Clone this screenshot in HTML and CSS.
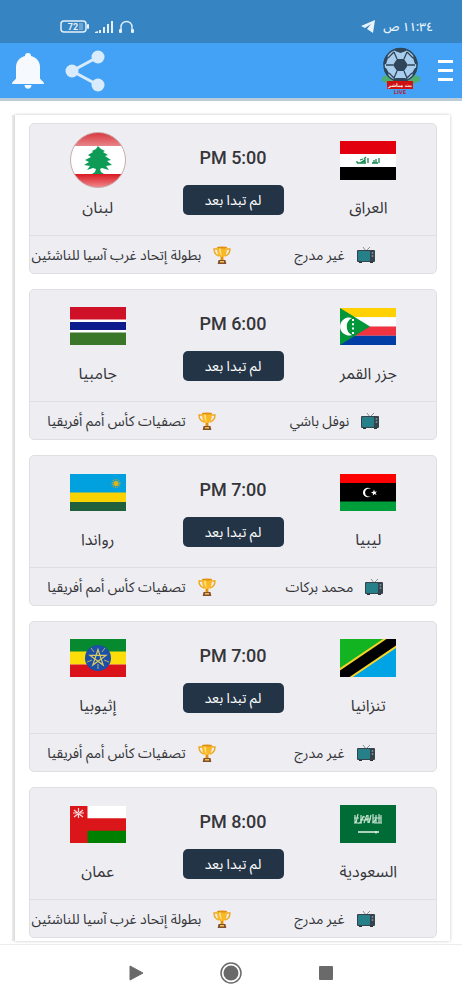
FILE: index.html
```html
<!DOCTYPE html>
<html lang="ar" dir="rtl">
<head>
    <meta charset="UTF-8">
    <meta name="viewport" content="width=device-width, initial-scale=1.0">
    <title>بث مباشر</title>
    <link rel="stylesheet" href="styles.css">
</head>
<body>

    <svg class="sprite" aria-hidden="true">
        <symbol id="icon-tv" viewBox="0 0 18 16">
            <path d="M6 0l3 4 4-4" fill="none" stroke="#8a9096" stroke-width="1"/>
            <rect x="0" y="3" width="18" height="12" rx="1" fill="#36434a"/>
            <rect x="1" y="4" width="12" height="10" rx="1" fill="#26808a"/>
            <circle cx="15.500" cy="6" r="1" fill="#78909c"/>
            <circle cx="15.500" cy="9" r="1" fill="#78909c"/>
            <path d="M2 15h3v1H2zM13 15h3v1h-3z" fill="#26343b"/>
        </symbol>
        <symbol id="icon-trophy" viewBox="0 0 18 18">
            <path d="M4.500 3H1c0 4 1.500 6 5 7M13.500 3H17c0 4-1.500 6-5 7" fill="none" stroke="#f0a61c" stroke-width="1.400"/>
            <path d="M4 1h10c0 5-.8 9-3.500 10l-.3 3H7.800l-.3-3C4.800 10 4 6 4 1z" fill="#f9b824"/>
            <path d="M6 2h2c0 4 .3 6 1 8-2-1-3-4-3-8z" fill="#ffe07a"/>
            <ellipse cx="9" cy="1.500" rx="5" ry="1" fill="#e08f10"/>
            <path d="M8 11h2l.5 3h-3z" fill="#e08f10"/>
            <path d="M5.500 14h7l.8 4H4.700z" fill="#83502f"/>
            <path d="M7 15h4v1.500H7z" fill="#f5c04a"/>
        </symbol>
    </svg>

    <div class="status-bar">
        <div class="status-group">
            <span class="clock">١١:٣٤ ص</span>
            <svg width="14" height="13" viewBox="0 0 14 13"><path d="M14 0L0 6l4 2 6-4-4 5 6 4z" fill="#e8f3fc"/></svg>
        </div>
        <div class="status-group status-icons">
            <svg width="15" height="14" viewBox="0 0 15 14">
                <path d="M2 11V7a5.500 5.500 0 0 1 11 0v4" fill="none" stroke="#e4f0fa" stroke-width="1.400"/>
                <rect x="0" y="9" width="3" height="4" rx="1" fill="#e4f0fa"/>
                <rect x="12" y="9" width="3" height="4" rx="1" fill="#e4f0fa"/>
            </svg>
            <svg width="18" height="13" viewBox="0 0 18 13" fill="#e4f0fa">
                <path d="M0 13v-1l3-1v2zM4 10h2v3H4zM8 7h2v6H8zM12 4h2v9h-2zM16 1h2v12h-2z"/>
            </svg>
            <svg width="29" height="13" viewBox="0 0 29 13">
                <rect x="1" y="1" width="25" height="11" rx="3" fill="none" stroke="#e4f0fa" stroke-width="1.500"/>
                <path d="M19 3h4v7h-4z" fill="#6aa5d4"/>
                <rect x="27" y="4" width="2" height="5" rx="1" fill="#e4f0fa"/>
                <text x="13" y="10" class="battery-text">72</text>
            </svg>
        </div>
    </div>

    <header class="app-bar">
        <button class="menu-btn" type="button" aria-label="القائمة"><i></i><i></i><i></i></button>
        <a class="logo" href="#" aria-label="بث مباشر">
            <svg width="40" height="50" viewBox="0 0 40 50">
                <ellipse cx="20" cy="33" rx="19.500" ry="6" fill="#4fae74"/>
                <clipPath id="ball"><circle cx="19.500" cy="19" r="17"/></clipPath>
                <g clip-path="url(#ball)">
                    <circle cx="19.500" cy="19" r="17" fill="#a9cdec"/>
                    <g fill="#2f4559">
                        <path d="M16 13h7l4 6-4 6h-7l-4-6z"/>
                        <path d="M12 0h15l-2 5-5.500 2L14 5z"/>
                        <path d="M0 9l6 0 1 3-2 6-5 1z"/>
                        <path d="M39 9l-6 0-1 3 2 6 5 1z"/>
                        <path d="M0 21l5 1 3 5-2 5-6-2z"/>
                        <path d="M39 21l-5 1-3 5 2 5 6-2z"/>
                        <path d="M12 34l3-2h9l3 2v4H12z"/>
                    </g>
                    <path d="M16 13l-3-7M23 13l3-7M12 19H5M27 19H34M16 25l-3 7M23 25l3 7M7 12l6-6M32 12l-6-6M8 27l6 6M31 27l-6 6" fill="none" stroke="#2f4559" stroke-width="1.300"/>
                </g>
                <circle cx="19.500" cy="19" r="16.500" fill="none" stroke="#2f4559" stroke-width="1.500"/>
                <rect x="6" y="35" width="26" height="8" fill="#cf1111"/>
                <text x="19" y="41" class="logo-text">بث مباشر</text>
                <text x="19" y="48" class="logo-live">LIVE</text>
            </svg>
        </a>
        <button class="share-btn" type="button" aria-label="مشاركة">
            <svg width="40" height="42" viewBox="0 0 40 42">
                <path d="M33 7L7 21l26 14" fill="none" stroke="#d9ecfd" stroke-width="3"/>
                <g fill="#d9ecfd"><circle cx="33" cy="7" r="6.500"/><circle cx="7" cy="21" r="6.500"/><circle cx="33" cy="35" r="6.500"/></g>
            </svg>
        </button>
        <button class="bell-btn" type="button" aria-label="التنبيهات">
            <svg width="32" height="36" viewBox="0 0 32 36" fill="#f6fafe">
                <path d="M16 0a3 3 0 0 1 3 3c6 1.500 9 6 9 11v11c0 2 4 3 4 6H0c0-3 4-4 4-6V14C4 9 7 4.500 13 3a3 3 0 0 1 3-3z"/>
                <path d="M12.500 32h7c0 5-7 5-7 0z"/>
            </svg>
        </button>
    </header>

    <main class="matches">

        <article class="match">
            <div class="match-main">
                <div class="team">
                    <div class="flag">
                        <svg width="56" height="39" viewBox="0 0 56 39">
                            <path d="M0 0h56v13H0z" fill="#e2000f"/>
                            <path d="M0 13h56v13H0z" fill="#fff"/>
                            <path d="M0 26h56v13H0z"/>
                            <path d="M17 22h9M17 22v-2M20 22l5-3v3M24 18l2-2M28 17v5M32 22h6M34 22v-3M36 22v-4M39 17v5M20 19l3-1" fill="none" stroke="#158a50" stroke-width="1.300"/>
                        </svg>
                    </div>
                    <span class="team-name">العراق</span>
                </div>
                <div class="info">
                    <time class="kickoff">PM 5:00</time>
                    <span class="state">لم تبدا بعد</span>
                </div>
                <div class="team">
                    <div class="flag">
                        <svg width="56" height="56" viewBox="0 0 56 56">
                            <defs>
                                <linearGradient id="shine" x1="0" y1="0" x2="0" y2="1">
                                    <stop offset="0" stop-color="#d7363d"/><stop offset=".25" stop-color="#e8868a"/>
                                    <stop offset=".25" stop-color="#fff"/><stop offset=".75" stop-color="#fff"/>
                                    <stop offset=".75" stop-color="#d9161f"/><stop offset="1" stop-color="#f08a8c"/>
                                </linearGradient>
                            </defs>
                            <circle cx="28" cy="28" r="27.500" fill="url(#shine)" stroke="#c9a9ac" stroke-width="1"/>
                            <path d="M28 14l3 3 4 2-2 1 5 3-3 1 6 4-4 1 5 4-6 1 3 4-7-2-2 1 1 3 3 2H22l3-2 1-3-3-1-6 2 3-4-6-1 5-3-4-2 6-3-3-2 5-3-1-1 4-2z" fill="#0d9b55"/>
                        </svg>
                    </div>
                    <span class="team-name">لبنان</span>
                </div>
            </div>
            <div class="match-foot">
                <p><svg class="icon"><use href="#icon-tv"/></svg><span>غير مدرج</span></p>
                <p><svg class="icon"><use href="#icon-trophy"/></svg><span>بطولة إتحاد غرب آسيا للناشئين</span></p>
            </div>
        </article>

        <article class="match">
            <div class="match-main">
                <div class="team">
                    <div class="flag">
                        <svg width="56" height="37" viewBox="0 0 56 37">
                            <path d="M0 0h56v9.200H0z" fill="#ffd100"/>
                            <path d="M0 9.200h56v9.300H0z" fill="#fff"/>
                            <path d="M0 18.500h56v9.200H0z" fill="#ef3340"/>
                            <path d="M0 27.700h56V37H0z" fill="#003da5"/>
                            <path d="M0 0l30 18.500L0 37z" fill="#009639"/>
                            <path d="M12 10a9 9 0 1 0 0 17 9.500 9.500 0 0 1 0-17z" fill="#fff"/>
                            <path d="M13 11v15" stroke="#fff" stroke-width="2" stroke-dasharray="2 2.300"/>
                        </svg>
                    </div>
                    <span class="team-name">جزر القمر</span>
                </div>
                <div class="info">
                    <time class="kickoff">PM 6:00</time>
                    <span class="state">لم تبدا بعد</span>
                </div>
                <div class="team">
                    <div class="flag">
                        <svg width="56" height="38" viewBox="0 0 56 38">
                            <path d="M0 0h56v38H0z" fill="#fff"/>
                            <path d="M0 0h56v12.500H0z" fill="#ce1126"/>
                            <path d="M0 15h56v8H0z" fill="#0c1c8c"/>
                            <path d="M0 25.500h56V38H0z" fill="#3a7728"/>
                        </svg>
                    </div>
                    <span class="team-name">جامبيا</span>
                </div>
            </div>
            <div class="match-foot">
                <p><svg class="icon"><use href="#icon-tv"/></svg><span>نوفل باشي</span></p>
                <p><svg class="icon"><use href="#icon-trophy"/></svg><span>تصفيات كأس أمم أفريقيا</span></p>
            </div>
        </article>

        <article class="match">
            <div class="match-main">
                <div class="team">
                    <div class="flag">
                        <svg width="56" height="37" viewBox="0 0 56 37">
                            <path d="M0 0h56v37H0z"/>
                            <path d="M0 0h56v9H0z" fill="#fe0000"/>
                            <path d="M0 27.500h56V37H0z" fill="#009e3a"/>
                            <path d="M31 15a4.800 4.800 0 1 0 0 7 4 4 0 1 1 0-7z" fill="#fff"/>
                            <path d="M34 15.500l.8 2.200 2.200-.3-1.500 1.500 1.200 2-2.200-.8-1.700 1.500.2-2.200-2-1.100 2.200-.5z" fill="#fff"/>
                        </svg>
                    </div>
                    <span class="team-name">ليبيا</span>
                </div>
                <div class="info">
                    <time class="kickoff">PM 7:00</time>
                    <span class="state">لم تبدا بعد</span>
                </div>
                <div class="team">
                    <div class="flag">
                        <svg width="56" height="37" viewBox="0 0 56 37">
                            <path d="M0 0h56v19H0z" fill="#00a1de"/>
                            <path d="M0 18.500h56V28H0z" fill="#fad201"/>
                            <path d="M0 28h56v9H0z" fill="#20603d"/>
                            <circle cx="46" cy="9.500" r="3.800" fill="none" stroke="#b5a63c" stroke-width="1.500" stroke-dasharray="1 1"/>
                            <circle cx="46" cy="9.500" r="2.600" fill="#dcb51c"/>
                        </svg>
                    </div>
                    <span class="team-name">رواندا</span>
                </div>
            </div>
            <div class="match-foot">
                <p><svg class="icon"><use href="#icon-tv"/></svg><span>محمد بركات</span></p>
                <p><svg class="icon"><use href="#icon-trophy"/></svg><span>تصفيات كأس أمم أفريقيا</span></p>
            </div>
        </article>

        <article class="match">
            <div class="match-main">
                <div class="team">
                    <div class="flag">
                        <svg width="56" height="38" viewBox="0 0 56 38">
                            <path d="M0 0h56v38H0z" fill="#f5d327"/>
                            <path d="M0 0h43L0 29z" fill="#12b422"/>
                            <path d="M56 38V9L13 38z" fill="#00a3e3"/>
                            <path d="M0 38v-6.500L46.500 0H56v6.500L9.500 38z"/>
                        </svg>
                    </div>
                    <span class="team-name">تنزانيا</span>
                </div>
                <div class="info">
                    <time class="kickoff">PM 7:00</time>
                    <span class="state">لم تبدا بعد</span>
                </div>
                <div class="team">
                    <div class="flag">
                        <svg width="56" height="38" viewBox="0 0 56 38">
                            <path d="M0 0h56v13H0z" fill="#078930"/>
                            <path d="M0 12.500h56v13H0z" fill="#fcdd09"/>
                            <path d="M0 25.500h56V38H0z" fill="#da121a"/>
                            <circle cx="28" cy="19" r="13" fill="#1b4fa8"/>
                            <path d="M28 10.500l5.200 15.600L20 16.400h16L22.800 26.100z" fill="none" stroke="#d9cb62" stroke-width="1.200"/>
                            <path d="M32 13l3-4M24 13l-3-4M34 21l5 2M22 21l-5 2M28 25v5" stroke="#d9cb62" stroke-width=".8"/>
                        </svg>
                    </div>
                    <span class="team-name">إثيوبيا</span>
                </div>
            </div>
            <div class="match-foot">
                <p><svg class="icon"><use href="#icon-tv"/></svg><span>غير مدرج</span></p>
                <p><svg class="icon"><use href="#icon-trophy"/></svg><span>تصفيات كأس أمم أفريقيا</span></p>
            </div>
        </article>

        <article class="match">
            <div class="match-main">
                <div class="team">
                    <div class="flag">
                        <svg width="56" height="38" viewBox="0 0 56 38">
                            <path d="M0 0h56v38H0z" fill="#006c35"/>
                            <path d="M15 10v8M18 9l-2 9M21 10v8M18 18c4 1 4-6 6-7M24 18l3-8M28 10v8M26 14h5M31 10l-2 8M33 9v9M32 18c3 0 3-5 5-5M36 10v8M39 9v9M41 10v8M14 13h5M14 18h8M33 13h8M22 12h3M34 18h8M20 15h8" fill="none" stroke="#c4e2cf" stroke-width="1.200"/>
                            <path d="M18 27h21M36 26v2.500" fill="none" stroke="#e4f3ea" stroke-width="1.400"/>
                        </svg>
                    </div>
                    <span class="team-name">السعودية</span>
                </div>
                <div class="info">
                    <time class="kickoff">PM 8:00</time>
                    <span class="state">لم تبدا بعد</span>
                </div>
                <div class="team">
                    <div class="flag">
                        <svg width="56" height="37" viewBox="0 0 56 37">
                            <path d="M0 0h56v37H0z" fill="#db161b"/>
                            <path d="M17.500 0H56v12.300H17.500z" fill="#fff"/>
                            <path d="M17.500 24.700H56V37H17.500z" fill="#008000"/>
                            <path d="M4 4l9 7M13 4l-9 7M8.500 2v4M3 7h4M10 7h4M8.500 9v3" fill="none" stroke="#ffdede" stroke-width="1.200"/>
                        </svg>
                    </div>
                    <span class="team-name">عمان</span>
                </div>
            </div>
            <div class="match-foot">
                <p><svg class="icon"><use href="#icon-tv"/></svg><span>غير مدرج</span></p>
                <p><svg class="icon"><use href="#icon-trophy"/></svg><span>بطولة إتحاد غرب آسيا للناشئين</span></p>
            </div>
        </article>

    </main>

    <nav class="nav-bar">
        <button type="button" aria-label="التطبيقات الأخيرة">
            <svg width="22" height="22" viewBox="0 0 22 22"><rect x="4" y="4" width="14" height="14" rx="1" fill="#6a6a6a"/></svg>
        </button>
        <button type="button" aria-label="الرئيسية">
            <svg width="22" height="22" viewBox="0 0 22 22"><circle cx="11" cy="11" r="10" fill="none" stroke="#6a6a6a" stroke-width="1.500"/><circle cx="11" cy="11" r="7.500" fill="#6a6a6a"/></svg>
        </button>
        <button type="button" aria-label="رجوع">
            <svg width="22" height="22" viewBox="0 0 22 22"><path d="M5 4l13 7-13 7z" fill="#6a6a6a" stroke="#6a6a6a" stroke-linejoin="round"/></svg>
        </button>
    </nav>

</body>
</html>
```
FILE: styles.css
```css
:root {
    --status-color: #3784c2;
    --bar-color: #43a2f6;
    --card-color: #eeeef2;
    --card-border: #dfdfe3;
    --state-color: #243447;
    --text-color: #35353a;
}

* {
    box-sizing: border-box;
}

body {
    display: flex;
    flex-direction: column;
    min-height: 100vh;
    margin: 0;
    background-color: #fff;
    color: var(--text-color);
    font-family: Roboto, "Noto Sans Arabic", "Noto Sans", "DejaVu Sans", sans-serif;
}

button {
    display: block;
    padding: 0;
    border: 0;
    background: none;
}

svg {
    display: block;
}

.sprite {
    display: none;
}

/* --- Status bar --- */
.status-bar {
    display: flex;
    justify-content: space-between;
    align-items: center;
    height: 43px;
    padding: 10px 29px 0 60px;
    background-color: var(--status-color);
}
.status-group {
    display: flex;
    align-items: center;
    gap: 8px;
}
.status-icons {
    gap: 6px;
}
.clock {
    color: #e8f3fc;
    font-size: 12px;
    font-weight: 500;
    line-height: 16px;
}
.battery-text {
    fill: #e4f0fa;
    font: bold 9px Roboto, sans-serif;
    text-anchor: middle;
    direction: ltr;
}

/* --- App bar --- */
.app-bar {
    display: flex;
    align-items: center;
    height: 58px;
    padding: 0 9px 0 12px;
    background-color: var(--bar-color);
    border-bottom: 3px solid #bccbd8;
}
.menu-btn {
    display: grid;
    gap: 6px;
    width: 15px;
}
.menu-btn i {
    height: 3px;
    background-color: #fff;
}
.logo {
    margin-right: 17px;
}
.logo-text {
    fill: #fff;
    font: bold 5px "DejaVu Sans", sans-serif;
    text-anchor: middle;
}
.logo-live {
    fill: #a52a48;
    font: bold 5px "DejaVu Sans", sans-serif;
    text-anchor: middle;
    direction: ltr;
}
.share-btn {
    margin-right: auto;
}
.bell-btn {
    margin-right: 21px;
}

/* --- Matches --- */
.matches {
    display: flex;
    flex-direction: column;
    gap: 15px;
    margin: 14px 12px 3px 15px;
    padding: 8px 13px 3px 14px;
    box-shadow: 0 0 3px #c4c4c8, -3px 0 1px #ebebed;
}
.match {
    background-color: var(--card-color);
    border: 1px solid var(--card-border);
    border-radius: 5px;
}
.match-main {
    display: grid;
    grid-template-columns: repeat(3, 1fr);
    height: 111px;
    padding-top: 8px;
}
.team,
.info {
    display: flex;
    flex-direction: column;
    align-items: center;
}
.flag {
    display: grid;
    place-items: center;
    height: 56px;
}
.team-name {
    margin-top: 8px;
    font-size: 16px;
    line-height: 24px;
}
.info {
    padding-top: 14px;
}
.kickoff {
    font-size: 18px;
    font-weight: 500;
    line-height: 24px;
}
.state {
    width: 101px;
    margin-top: 15px;
    border-radius: 5px;
    background-color: var(--state-color);
    color: #fff;
    font-size: 14px;
    line-height: 30px;
    text-align: center;
}
.match-foot {
    display: grid;
    grid-template-columns: 1fr 1fr;
    height: 38px;
    border-top: 1px solid var(--card-border);
}
.match-foot p {
    display: flex;
    justify-content: center;
    align-items: center;
    gap: 12px;
    min-width: 0;
    margin: 0;
    font-size: 14px;
    line-height: 20px;
    white-space: nowrap;
}
.icon {
    flex: none;
    width: 18px;
    height: 18px;
}

/* --- Navigation bar --- */
.nav-bar {
    position: sticky;
    bottom: 0;
    display: flex;
    justify-content: center;
    align-items: center;
    gap: 73px;
    height: 57px;
    margin-top: auto;
    background-color: #fff;
    border-top: 1px solid #ececec;
}
```
